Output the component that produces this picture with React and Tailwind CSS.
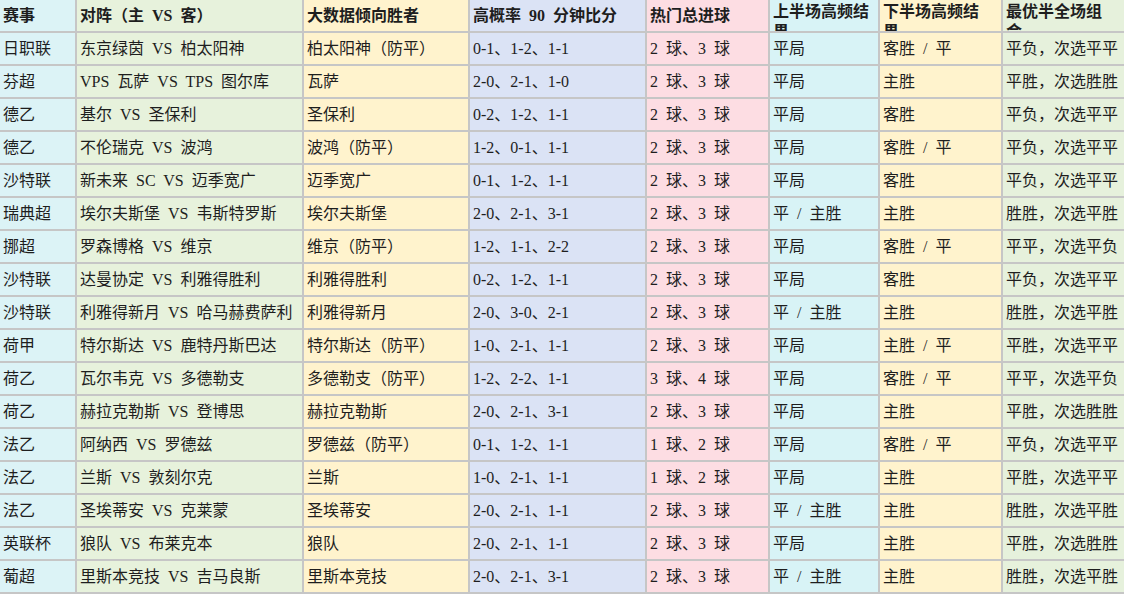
import React from 'react';

const headers = [
    '赛事',
    '对阵（主 VS 客）',
    '大数据倾向胜者',
    '高概率 90 分钟比分',
    '热门总进球',
    '上半场高频结果',
    '下半场高频结果',
    '最优半全场组合',
];

const colBg = [
    'bg-[#dcf3f6]',
    'bg-[#e7f2dc]',
    'bg-[#fff3cd]',
    'bg-[#dbe3f5]',
    'bg-[#fddde3]',
    'bg-[#d8f3f6]',
    'bg-[#fff3cd]',
    'bg-[#e6f1dc]',
];

// header cell spacing: last three titles wrap after six characters and get clipped
const headPad = [
    'flex items-center',
    'flex items-center',
    'flex items-center',
    'flex items-center',
    'flex items-center',
    'pt-[2px] pr-[2px] leading-[20px]',
    'pt-[2px] pr-[10px] leading-[20px]',
    'pt-[2px] pr-[10px] leading-[20px]',
];

const rows = [
    ['日职联', '东京绿茵 VS 柏太阳神', '柏太阳神（防平）', '0-1、1-2、1-1', '2 球、3 球', '平局', '客胜 / 平', '平负，次选平平'],
    ['芬超', 'VPS 瓦萨 VS TPS 图尔库', '瓦萨', '2-0、2-1、1-0', '2 球、3 球', '平局', '主胜', '平胜，次选胜胜'],
    ['德乙', '基尔 VS 圣保利', '圣保利', '0-2、1-2、1-1', '2 球、3 球', '平局', '客胜', '平负，次选平平'],
    ['德乙', '不伦瑞克 VS 波鸿', '波鸿（防平）', '1-2、0-1、1-1', '2 球、3 球', '平局', '客胜 / 平', '平负，次选平平'],
    ['沙特联', '新未来 SC VS 迈季宽广', '迈季宽广', '0-1、1-2、1-1', '2 球、3 球', '平局', '客胜', '平负，次选平平'],
    ['瑞典超', '埃尔夫斯堡 VS 韦斯特罗斯', '埃尔夫斯堡', '2-0、2-1、3-1', '2 球、3 球', '平 / 主胜', '主胜', '胜胜，次选平胜'],
    ['挪超', '罗森博格 VS 维京', '维京（防平）', '1-2、1-1、2-2', '2 球、3 球', '平局', '客胜 / 平', '平平，次选平负'],
    ['沙特联', '达曼协定 VS 利雅得胜利', '利雅得胜利', '0-2、1-2、1-1', '2 球、3 球', '平局', '客胜', '平负，次选平平'],
    ['沙特联', '利雅得新月 VS 哈马赫费萨利', '利雅得新月', '2-0、3-0、2-1', '2 球、3 球', '平 / 主胜', '主胜', '胜胜，次选平胜'],
    ['荷甲', '特尔斯达 VS 鹿特丹斯巴达', '特尔斯达（防平）', '1-0、2-1、1-1', '2 球、3 球', '平局', '主胜 / 平', '平胜，次选平平'],
    ['荷乙', '瓦尔韦克 VS 多德勒支', '多德勒支（防平）', '1-2、2-2、1-1', '3 球、4 球', '平局', '客胜 / 平', '平平，次选平负'],
    ['荷乙', '赫拉克勒斯 VS 登博思', '赫拉克勒斯', '2-0、2-1、3-1', '2 球、3 球', '平局', '主胜', '平胜，次选胜胜'],
    ['法乙', '阿纳西 VS 罗德兹', '罗德兹（防平）', '0-1、1-2、1-1', '1 球、2 球', '平局', '客胜 / 平', '平负，次选平平'],
    ['法乙', '兰斯 VS 敦刻尔克', '兰斯', '1-0、2-1、1-1', '1 球、2 球', '平局', '主胜', '平胜，次选平平'],
    ['法乙', '圣埃蒂安 VS 克莱蒙', '圣埃蒂安', '2-0、2-1、1-1', '2 球、3 球', '平 / 主胜', '主胜', '胜胜，次选平胜'],
    ['英联杯', '狼队 VS 布莱克本', '狼队', '2-0、2-1、1-1', '2 球、3 球', '平局', '主胜', '平胜，次选胜胜'],
    ['葡超', '里斯本竞技 VS 吉马良斯', '里斯本竞技', '2-0、2-1、3-1', '2 球、3 球', '平 / 主胜', '主胜', '胜胜，次选平胜'],
];

export default function App() {
    return (
        <div className="w-[1124px] h-[596px] overflow-hidden bg-white">
            <div
                className="
                    grid grid-cols-[75px_225px_164px_175px_121px_108px_121px_1fr]
                    auto-rows-[31px] gap-[2px] bg-[#c6c6c6] pb-[2px]
                    text-[16px] text-[#1e1e1e] [word-spacing:4px]
                "
                style={{ fontFamily: '"Liberation Serif", "Noto Sans CJK SC", serif' }}
            >
                {/* Header */}
                {headers.map((h, i) => (
                    <div
                        key={h}
                        className={`${colBg[i]} ${headPad[i]} overflow-hidden pl-[3px] font-bold whitespace-normal`}
                    >
                        {h}
                    </div>
                ))}

                {/* Rows */}
                {rows.map((row, r) =>
                    row.map((cell, c) => (
                        <div
                            key={`${r}-${c}`}
                            className={`${colBg[c]} flex items-center pl-[3px] overflow-hidden whitespace-nowrap`}
                        >
                            {cell}
                        </div>
                    ))
                )}
            </div>
        </div>
    );
}
